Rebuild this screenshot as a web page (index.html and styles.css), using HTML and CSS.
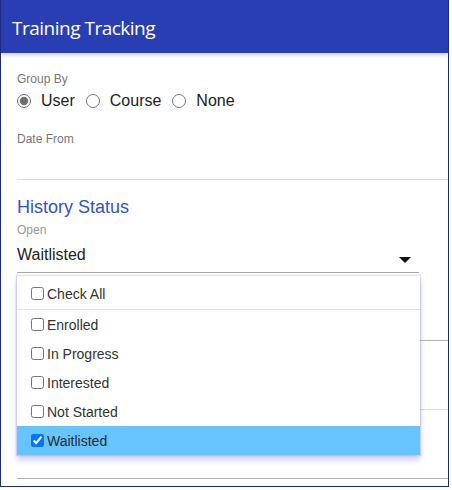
FILE: index.html
```html
<!DOCTYPE html>
<html lang="en">
<head>
  <meta charset="UTF-8">
  <meta name="viewport" content="width=device-width, initial-scale=1.0">
  <title>Training Tracking</title>
  <link rel="stylesheet" href="styles.css">
</head>
<body>
  <div class="panel">
    <header class="panel-head">
      <h1>Training Tracking</h1>
    </header>

    <div class="panel-body">
      <div class="field-label">Group By</div>
      <div class="radio-row">
        <label class="radio"><input type="radio" name="group" checked><span>User</span></label>
        <label class="radio"><input type="radio" name="group"><span>Course</span></label>
        <label class="radio"><input type="radio" name="group"><span>None</span></label>
      </div>

      <div class="field-label date-label">Date From</div>
      <div class="input-line"></div>

      <h2 class="section-title">History Status</h2>
      <div class="field-label open-label">Open</div>

      <div class="select">
        <span class="select-value">Waitlisted</span>
        <span class="caret"></span>

        <ul class="dropdown">
          <li class="check-all"><label><input type="checkbox"><span>Check All</span></label></li>
          <li><label><input type="checkbox"><span>Enrolled</span></label></li>
          <li><label><input type="checkbox"><span>In Progress</span></label></li>
          <li><label><input type="checkbox"><span>Interested</span></label></li>
          <li><label><input type="checkbox"><span>Not Started</span></label></li>
          <li class="selected"><label><input type="checkbox" checked><span>Waitlisted</span></label></li>
        </ul>
      </div>

      <div class="blank first"></div>
      <div class="blank soft"></div>
      <div class="blank"></div>
    </div>
  </div>
</body>
</html>
```

FILE: styles.css
```css
body {
  margin: 0;
  background: #ffffff;
  font-family: "Liberation Sans", Arial, sans-serif;
  color: #222222;
}
.panel {
  box-sizing: border-box;
  width: 449px;
  height: 487px;
  border: 1px solid #1c2c84;
  border-top: none;
  overflow: hidden;
}
.panel-head {
  height: 53px;
  background-color: #2a3eb3;
  box-shadow: 0 2px 4px rgba(110, 110, 230, 0.35);
  display: flex;
  align-items: center;
  padding: 3px 0 0 11px;
  box-sizing: border-box;
  position: relative;
  z-index: 1;
}
.panel-head h1 {
  margin: 0;
  font-family: "Open Sans", sans-serif;
  font-size: 19px;
  font-weight: 400;
  color: #ffffff;
  letter-spacing: -0.5px;
}
.panel-body {
  padding: 19px 0 0 16px;
}
.field-label {
  font-size: 12px;
  line-height: 14px;
  color: #777777;
}
.radio-row {
  display: flex;
  margin-top: 5px;
  height: 20px;
  align-items: center;
}
.radio {
  display: flex;
  align-items: center;
  font-size: 16px;
  line-height: 20px;
  color: #222222;
  margin-right: 11px;
}
.radio input {
  margin: 0 10px 0 0;
  width: 14px;
  height: 14px;
  accent-color: #707070;
}
.date-label {
  margin-top: 21px;
}
.input-line {
  height: 33px;
  border-bottom: 1px solid #d6d6f3;
}
.section-title {
  margin: 17px 0 0;
  font-size: 18px;
  line-height: 21px;
  font-weight: 400;
  color: #3353c2;
}
.open-label {
  margin-top: 5px;
  color: #999999;
}
.select {
  position: relative;
  margin-top: 8px;
  margin-right: 29px;
  height: 27px;
  border-bottom: 1px solid #a8a8a8;
  z-index: 2;
}
.select-value {
  font-size: 16px;
  line-height: 20px;
  color: #222222;
}
.caret {
  position: absolute;
  right: 8px;
  top: 12px;
  width: 0;
  height: 0;
  border-left: 6px solid transparent;
  border-right: 6px solid transparent;
  border-top: 6px solid #111111;
}
.dropdown {
  position: absolute;
  top: 31px;
  left: 0;
  right: -1px;
  margin: 0;
  padding: 0;
  list-style: none;
  background: #ffffff;
  box-shadow: 0 0 1px 1px rgba(150, 150, 240, 0.35), 0 5px 6px rgba(130, 130, 235, 0.4);
}
.dropdown li label {
  display: flex;
  align-items: center;
  height: 29px;
  padding-left: 14px;
  font-size: 14px;
  color: #333333;
}
.dropdown li.check-all label {
  height: 34px;
  padding-top: 2px;
  box-sizing: border-box;
  border-bottom: 1px solid #e0e0f6;
}
.dropdown input {
  margin: 0 3px 0 0;
  width: 13px;
  height: 13px;
}
.dropdown li.selected {
  background-color: #68c4ff;
}
.dropdown li.selected label {
  color: #1c2a2e;
}
.blank {
  height: 68px;
  border-bottom: 1px solid #b0b0b0;
}
.blank.first {
  height: 67px;
}
.blank.soft {
  border-bottom-color: #d6d6f3;
}
```
